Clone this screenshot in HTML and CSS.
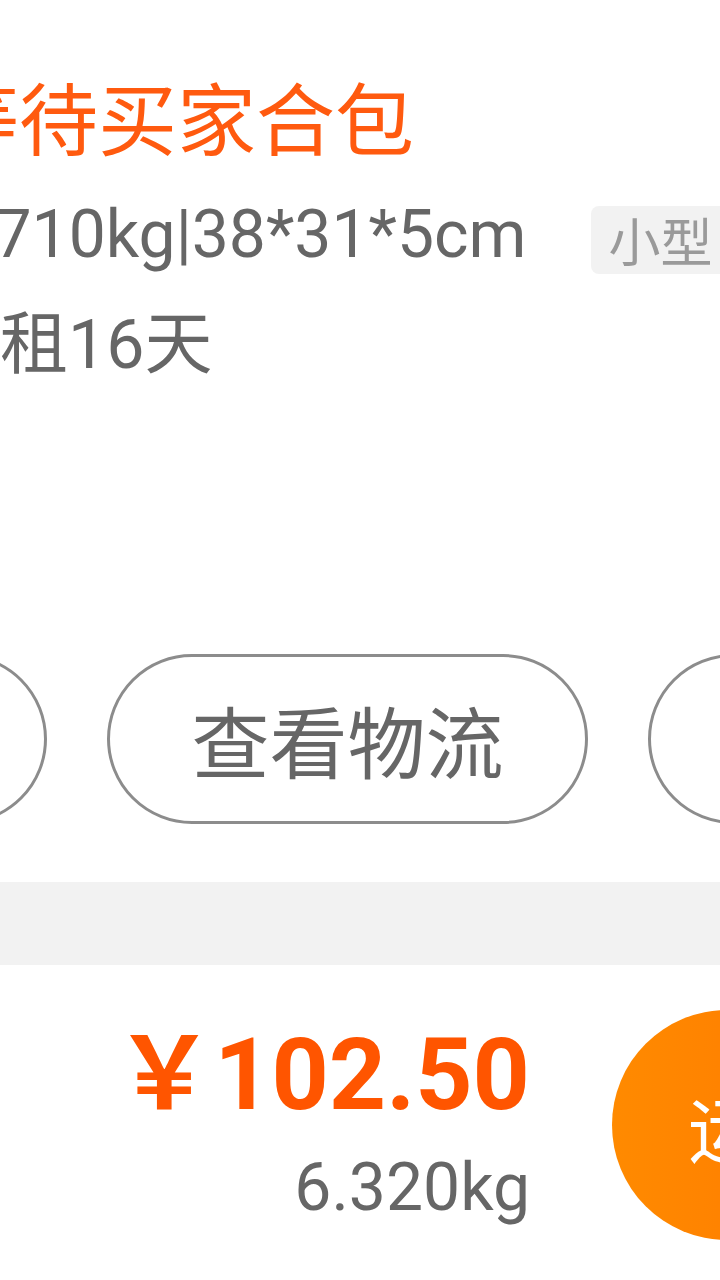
FILE: index.html
```html
<!DOCTYPE html>
<html>
  <head>
    <meta charset="UTF-8">
    <title>订单详情</title>
    <link rel="stylesheet" href="styles.css">
  </head>
  <body>
    <div class="order">
      <div class="info">
        <div class="title">等待买家合包</div>
        <div class="spec">
          <span class="size">0.710kg|38*31*5cm</span>
          <span class="tag">小型</span>
        </div>
        <div class="days">免租16天</div>
      </div>
      <div class="actions">
        <button class="btn">联系客服</button>
        <button class="btn">查看物流</button>
        <button class="btn">申请合包</button>
      </div>
    </div>
    <div class="divider"></div>
    <div class="summary">
      <div class="total">
        <div class="price"><span class="yen">￥</span>102.50</div>
        <div class="weight">6.320kg</div>
      </div>
      <button class="pay">运费支付</button>
    </div>
  </body>
</html>
```

FILE: styles.css
```css
html, body {
  margin: 0;
  overflow: hidden;
  background-color: #fff;
}
body {
  width: 720px;
  font-family: Roboto, "Noto Sans CJK SC", sans-serif;
  color: #666;
}
.order {
  padding-top: 66px;
}
.info {
  margin-left: -60px;
}
.title {
  font-family: "Noto Sans CJK SC", sans-serif;
  font-size: 79px;
  line-height: 100px;
  color: #ff5a0f;
  white-space: nowrap;
}
.spec {
  display: flex;
  align-items: center;
  margin-top: 24px;
  white-space: nowrap;
}
.size {
  font-size: 66px;
  line-height: 90px;
}
.tag {
  margin-left: 64px;
  margin-top: 10px;
  padding: 0 18px;
  height: 68px;
  line-height: 68px;
  font-family: "Noto Sans CJK SC", sans-serif;
  font-size: 52px;
  color: #9a9a9a;
  background-color: #f2f2f2;
  border-radius: 8px;
}
.days {
  margin-top: 20px;
  margin-left: -8px;
  font-size: 68px;
  line-height: 90px;
  white-space: nowrap;
}
.actions {
  display: flex;
  gap: 60px;
  margin-top: 264px;
  margin-left: -434px;
  padding-bottom: 58px;
}
.btn {
  flex: none;
  width: 481px;
  height: 170px;
  border: 3px solid #8c8c8c;
  border-radius: 85px;
  background-color: #fff;
  font-family: "Noto Sans CJK SC", sans-serif;
  font-size: 78px;
  color: #666;
  padding: 0;
}
.divider {
  height: 83px;
  background-color: #f2f2f2;
}
.summary {
  display: flex;
  align-items: flex-start;
  gap: 82px;
  padding-top: 45px;
}
.total {
  width: 530px;
  margin-top: 1px;
  text-align: right;
  flex: none;
}
.price {
  font-size: 100px;
  font-weight: bold;
  line-height: 110px;
  color: #ff5500;
  white-space: nowrap;
}
.yen {
  font-family: "Noto Sans CJK SC", sans-serif;
}
.weight {
  font-size: 66px;
  line-height: 80px;
  margin-top: 18px;
}
.pay {
  flex: none;
  width: 480px;
  height: 230px;
  border: none;
  border-radius: 115px;
  background: linear-gradient(90deg, #ff8a00, #ff6a00);
  color: #fff;
  font-family: "Noto Sans CJK SC", sans-serif;
  font-size: 72px;
  text-align: left;
  padding: 0 0 0 76px;
}
```
